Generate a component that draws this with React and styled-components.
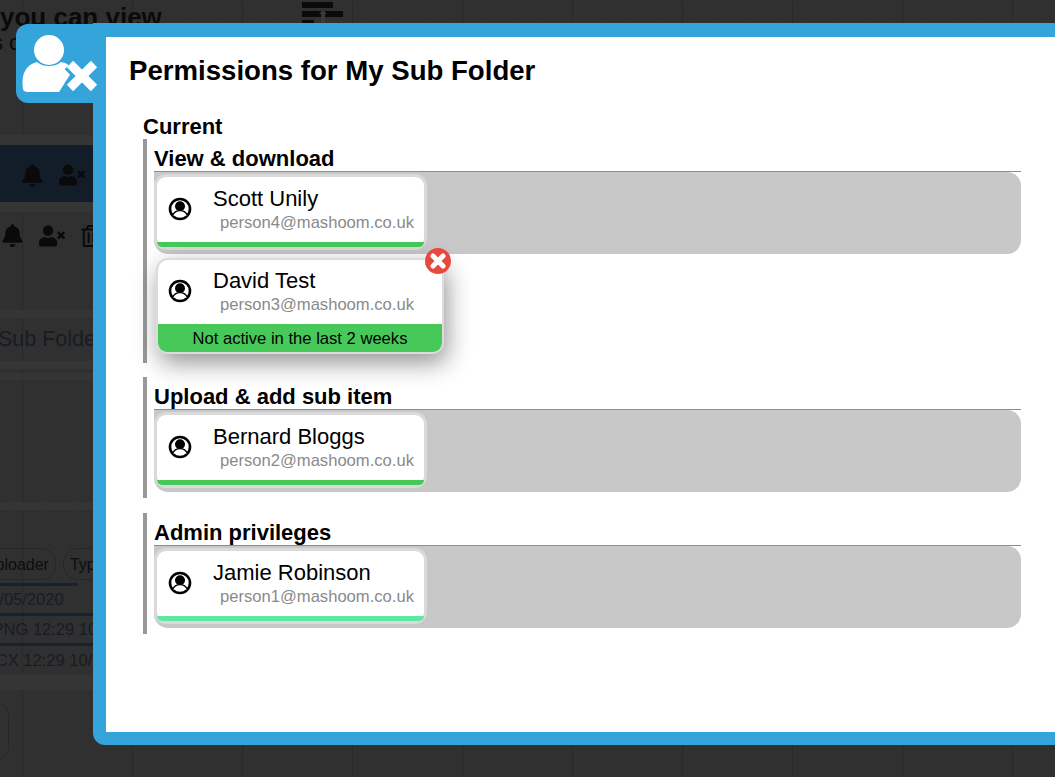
import React from 'react';
import styled, { createGlobalStyle } from 'styled-components';
import { FaBell, FaUserTimes, FaRegTrashAlt } from 'react-icons/fa';

const GlobalStyle = createGlobalStyle`
  html, body {
    margin: 0;
    height: 100%;
    overflow: hidden;
    background: #2f2f2f;
    font-family: "Liberation Sans", Arial, sans-serif;
  }
  * {
    box-sizing: border-box;
  }
`;

const Page = styled.div`
  position: relative;
  width: 1055px;
  height: 777px;
  overflow: hidden;
`;

const Backdrop = styled.div`
  display: flex;
  flex-direction: column;
  height: 100%;
  overflow: hidden;
  color: #0a0a0a;
  background-color: #303030;
  background-image:
    repeating-linear-gradient(90deg, #282828 0 1px, transparent 1px 110px),
    radial-gradient(#282828 0.6px, transparent 0.8px);
  background-position: 22px 0, 0 0;
  background-size: auto, 11px 11px;
`;

const Header = styled.div`
  display: flex;
  justify-content: space-between;
  width: 345px;
  height: 32px;
  font-size: 26px;
  font-weight: 700;
  line-height: 34px;
`;

const MenuGlyph = styled.svg`
  flex: none;
  width: 44px;
  height: 23px;
  margin-top: 2px;
`;

const SubHeader = styled.div`
  height: 103px;
  margin-left: -8px;
  font-size: 22px;
  line-height: 22px;
`;

const Band = styled.div`
  flex: none;
  height: ${(p) => p.$h}px;
  margin-bottom: ${(p) => p.$after || 0}px;
  background: #353535;
`;

const Spacer = styled.div`
  flex: none;
  height: ${(p) => p.$h}px;
`;

const Strip = styled.div`
  flex: none;
  display: flex;
  align-items: center;
  gap: ${(p) => p.$gap || 0}px;
  height: ${(p) => p.$h}px;
  padding: 3px 0 0 ${(p) => p.$left || 0}px;
  background: ${(p) => (p.$navy ? '#131d2a' : 'transparent')};
`;

const DimText = styled.div`
  flex: none;
  height: ${(p) => p.$h}px;
  margin-left: ${(p) => p.$left || 0}px;
  color: #171c24;
  font-size: ${(p) => p.$size}px;
  line-height: ${(p) => p.$h}px;
  white-space: nowrap;
`;

const Chips = styled.div`
  flex: none;
  display: flex;
  gap: 7px;
  height: 35px;
  margin-left: -23px;
`;

const Chip = styled.span`
  height: 32px;
  padding: 0 6px;
  border: 1px solid #272727;
  border-radius: 14px;
  color: #0d0d0d;
  font-size: 16px;
  line-height: 32px;
`;

const Rule = styled.div`
  flex: none;
  width: ${(p) => p.$w || 93}px;
  height: 3px;
  background: #172231;
`;

const Outline = styled.div`
  flex: none;
  width: 40px;
  height: 57px;
  margin: 13px 0 0 -31px;
  border: 1px solid #272727;
  border-radius: 12px;
`;

const Modal = styled.section`
  position: absolute;
  top: 23px;
  left: 93px;
  width: 990px;
  height: 722px;
  padding: 18px 0 0 23px;
  border: 13px solid #34a4db;
  border-top-width: 14px;
  border-radius: 0 0 0 12px;
  background: #fff;
  color: #000;
`;

const Tab = styled.div`
  position: absolute;
  top: 24px;
  left: 16px;
  width: 90px;
  height: 79px;
  border-radius: 12px 0 0 12px;
  background: #34a4db;
`;

const TabGlyph = styled.svg`
  display: block;
  width: 90px;
  height: 79px;
`;

const Title = styled.h1`
  margin: 0 0 27px;
  font-size: 27.6px;
  font-weight: 700;
  line-height: 32px;
`;

const Section = styled.div`
  width: 878px;
  margin-left: 14px;
`;

const SectionTitle = styled.div`
  font-size: 22px;
  font-weight: 700;
  line-height: 25px;
`;

const Group = styled.div`
  margin-bottom: ${(p) => p.$after}px;
  padding: 6px 0 6px 7px;
  border-left: 4px solid #999;
`;

const GroupTitle = styled.h2`
  height: 27px;
  margin: 0;
  border-bottom: 1px solid #8c8c8c;
  font-size: 22px;
  font-weight: 700;
  line-height: 27px;
`;

const Shelf = styled.div`
  height: 82px;
  padding-top: 2px;
  border-radius: 0 14px 14px 14px;
  background: #c8c8c8;
`;

const Card = styled.div`
  position: relative;
  display: flex;
  flex-direction: column;
  width: ${(p) => (p.$open ? 288 : 273)}px;
  height: ${(p) => (p.$open ? 96 : 76)}px;
  margin: ${(p) => (p.$open ? '4px 0 3px 2px' : '0')};
  border: ${(p) => (p.$open ? '2px solid #dcdcdc' : '3px solid #dadada')};
  border-radius: 12px;
  background: #fff;
  box-shadow: ${(p) =>
    p.$open ? '3px 9px 24px rgba(0, 0, 0, 0.42)' : 'none'};
`;

const CardBody = styled.div`
  flex: 1;
  display: flex;
  align-items: flex-start;
  padding: ${(p) => (p.$open ? '19px 0 0 10px' : '20px 0 0 11px')};
`;

const PersonGlyph = styled.svg`
  flex: none;
  width: 24px;
  height: 24px;
`;

const Who = styled.div`
  display: flex;
  flex-direction: column;
  margin: -11px 0 0 21px;
`;

const Name = styled.div`
  font-size: 22px;
  line-height: 26px;
`;

const Email = styled.div`
  margin: 1px 0 0 7px;
  color: #8a8a8a;
  font-size: 16.6px;
  line-height: 20px;
  white-space: nowrap;
`;

const Activity = styled.div`
  flex: none;
  height: ${(p) => p.$h}px;
  border-radius: 0 0 9px 9px;
  background: ${(p) => p.$color};
  font-size: 16.6px;
  line-height: ${(p) => p.$h + 2}px;
  text-align: center;
`;

const RemoveButton = styled.button`
  position: absolute;
  top: -12px;
  right: -9px;
  width: 26px;
  height: 26px;
  padding: 0;
  border: none;
  border-radius: 50%;
  background: #e8493f;
`;

const RemoveGlyph = styled.svg`
  display: block;
  width: 26px;
  height: 26px;
`;

const PersonIcon = () => (
  <PersonGlyph viewBox='0 0 24 24'>
    <circle cx='12' cy='12' r='10' fill='#fff' stroke='#000' strokeWidth='2.6' />
    <circle cx='12' cy='9.2' r='5' fill='#000' />
    <path d='M4.6 18.6c1.4-3.6 4.2-5 7.4-5s6 1.4 7.4 5' fill='#fff' stroke='#000' strokeWidth='1.4' />
  </PersonGlyph>
);

const Person = ({ name, email, open, color }) => (
  <Card $open={open}>
    <CardBody $open={open}>
      <PersonIcon />
      <Who>
        <Name>{name}</Name>
        <Email>{email}</Email>
      </Who>
    </CardBody>
    {open ? (
      <Activity $h={28} $color='#47c95a'>
        Not active in the last 2 weeks
      </Activity>
    ) : (
      <Activity $h={5} $color={color} />
    )}
    {open && (
      <RemoveButton aria-label='Remove'>
        <RemoveGlyph viewBox='0 0 26 26'>
          <path d='M8 8l10 10M18 8L8 18' stroke='#fff' strokeWidth='5' strokeLinecap='round' />
        </RemoveGlyph>
      </RemoveButton>
    )}
  </Card>
);

const App = () => (
  <>
    <GlobalStyle />
    <Page>
      <Backdrop>
        <Header>
          <span>you can view</span>
          <MenuGlyph viewBox='0 0 44 23'>
            <path d='M1 0h31v6H1zM1 9h41v6H1zM1 18h12v5H1z' fill='#0a0a0a' />
            <path d='M22 8l4 4h-2v11h-4V12h-2z' fill='#3a3a3a' />
          </MenuGlyph>
        </Header>
        <SubHeader>s c</SubHeader>
        <Band $h={10} />
        <Strip $navy $h={57} $left={21} $gap={15}>
          <FaBell size={23} />
          <FaUserTimes size={26} />
        </Strip>
        <Band $h={10} />
        <Strip $h={44} $left={1} $gap={15}>
          <FaBell size={23} />
          <FaUserTimes size={26} />
          <FaRegTrashAlt size={22} />
        </Strip>
        <Spacer $h={54} />
        <Band $h={8} />
        <DimText $h={43} $size={21.5} $left={-2}>
          Sub Folder
        </DimText>
        <Band $h={8} $after={4} />
        <Band $h={7} />
        <Spacer $h={122} />
        <Band $h={8} />
        <Spacer $h={38} />
        <Chips>
          <Chip>Uploader</Chip>
          <Chip>Type</Chip>
        </Chips>
        <Rule $w={78} />
        <DimText $h={27} $size={16.5} $left={-19}>
          10/05/2020
        </DimText>
        <Rule />
        <DimText $h={27} $size={16.5} $left={-12}>
          .PNG 12:29 10/05/2020
        </DimText>
        <Rule />
        <DimText $h={29} $size={16.5} $left={-17}>
          OCX 12:29 10/05/2020
        </DimText>
        <Band $h={15} />
        <Outline />
      </Backdrop>
      <Modal>
        <Title>Permissions for My Sub Folder</Title>
        <Section>
          <SectionTitle>Current</SectionTitle>
          <Group $after={14}>
            <GroupTitle>View &amp; download</GroupTitle>
            <Shelf>
              <Person name='Scott Unily' email='person4@mashoom.co.uk' color='#47c95a' />
            </Shelf>
            <Person open name='David Test' email='person3@mashoom.co.uk' />
          </Group>
          <Group $after={15}>
            <GroupTitle>Upload &amp; add sub item</GroupTitle>
            <Shelf>
              <Person name='Bernard Bloggs' email='person2@mashoom.co.uk' color='#47c95a' />
            </Shelf>
          </Group>
          <Group $after={0}>
            <GroupTitle>Admin privileges</GroupTitle>
            <Shelf>
              <Person name='Jamie Robinson' email='person1@mashoom.co.uk' color='#5ee8a0' />
            </Shelf>
          </Group>
        </Section>
      </Modal>
      <Tab>
        <TabGlyph viewBox='0 0 90 79'>
          <circle cx='33' cy='26' r='15' fill='#fff' />
          <path
            d='M7 65c-2-14 2-24 14-27 4 3 8 4 12 4s8-1 12-4c6 1 10 4 12 8L43 68H12c-3 0-5-1-5-3z'
            fill='#fff'
          />
          <path d='M54 40l24 24M78 40L54 64' stroke='#34a4db' strokeWidth='15' />
          <path d='M54 40l24 24M78 40L54 64' stroke='#fff' strokeWidth='9' />
        </TabGlyph>
      </Tab>
    </Page>
  </>
);

export default App;
